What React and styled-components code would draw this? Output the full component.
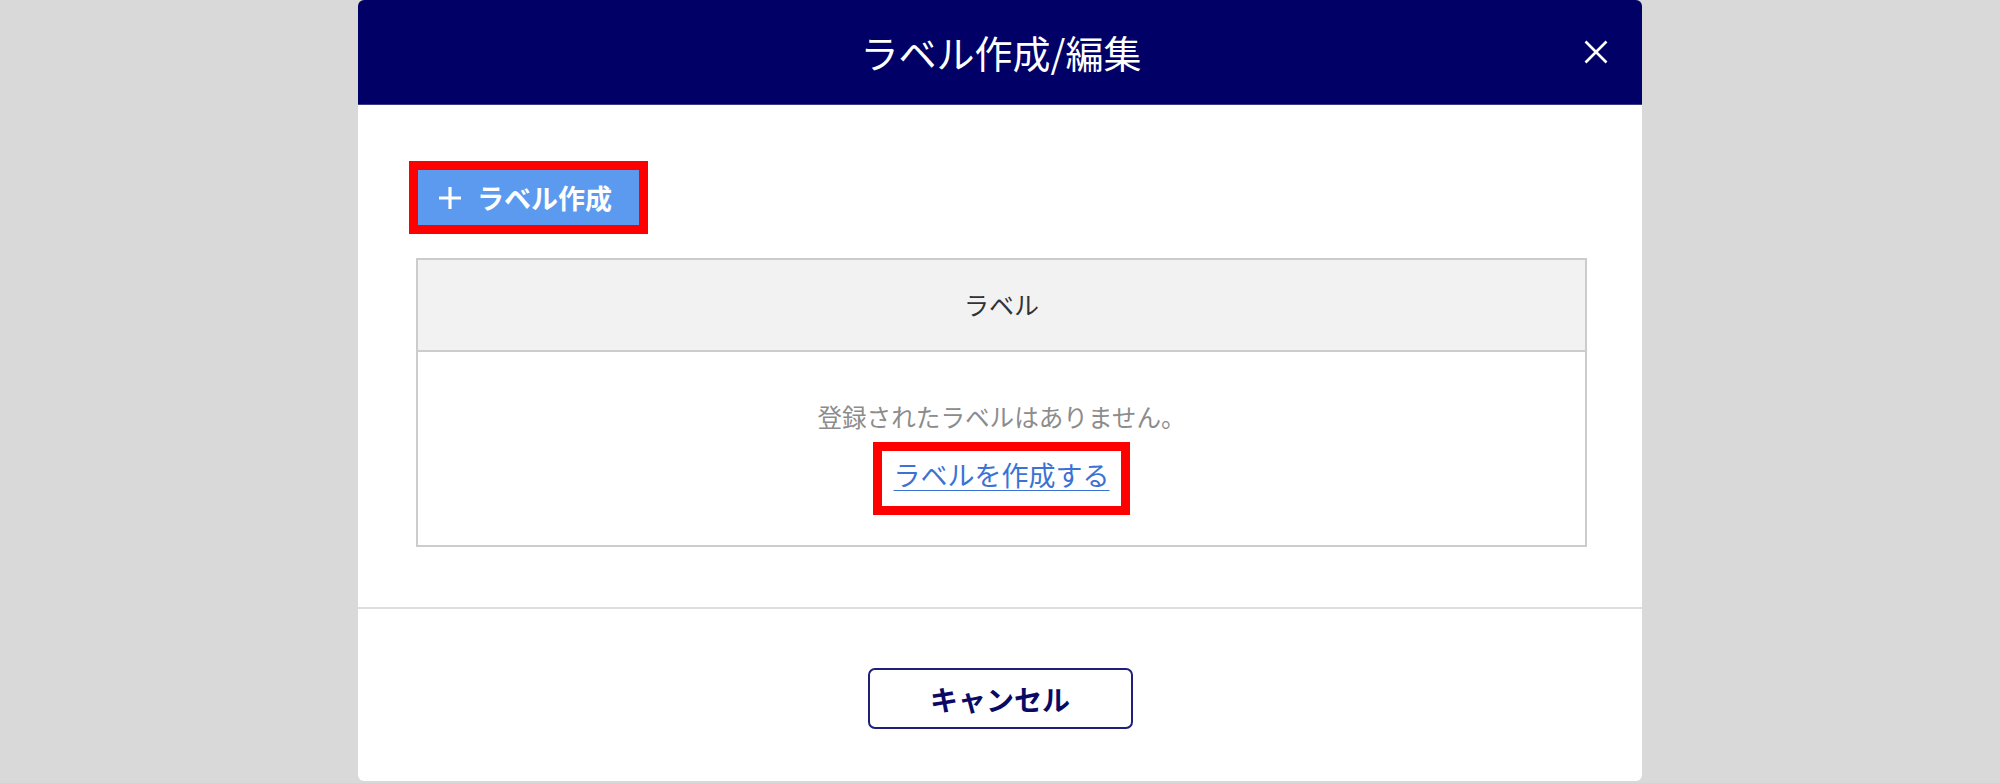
import React from "react";
import styled, { createGlobalStyle } from "styled-components";

const GlobalStyle = createGlobalStyle`
  html, body {
    margin: 0;
    padding: 0;
    background: #d9d9d9;
    font-family: "Noto Sans CJK JP", "Noto Sans", sans-serif;
  }
  * { box-sizing: border-box; }
`;

const Page = styled.div`
  display: flex;
  justify-content: center;
  width: 2000px;
  height: 783px;
  background: #d9d9d9;
`;

const Modal = styled.div`
  width: 1284px;
  height: 781px;
  background: #ffffff;
  border-radius: 6px;
  overflow: hidden;
  display: flex;
  flex-direction: column;
`;

const Header = styled.div`
  height: 105px;
  flex: none;
  background: #000066;
  border-bottom: 1px solid #3a3a86;
  display: grid;
  grid-template-columns: 1fr auto 1fr;
  align-items: center;
`;

const Title = styled.h1`
  grid-column: 2;
  margin: 0;
  color: #ffffff;
  font-size: 38px;
  font-weight: 400;
  line-height: 1;
  letter-spacing: 0;
  padding-left: 2px;
`;

const CloseButton = styled.button`
  grid-column: 3;
  justify-self: end;
  margin-right: 34px;
  width: 24px;
  height: 24px;
  padding: 0;
  border: none;
  background: transparent;
  display: flex;
  align-items: center;
  justify-content: center;
  cursor: pointer;
`;

const Body = styled.div`
  padding: 65px 55px 0 58px;
  height: 502px;
  flex: none;
  display: flex;
  flex-direction: column;
  align-items: flex-start;
`;

const CreateButton = styled.button`
  margin-left: 2px;
  width: 221px;
  height: 55px;
  background: #5b9aee;
  border: none;
  outline: 9px solid #ff0000;
  display: flex;
  align-items: center;
  gap: 16px;
  padding: 0 0 0 21px;
  color: #ffffff;
  font-family: "Noto Sans CJK JP", sans-serif;
  font-size: 27px;
  font-weight: 700;
  letter-spacing: 0;
  cursor: pointer;
`;

const Table = styled.div`
  margin-top: 33px;
  width: 100%;
  border: 2px solid #cccccc;
`;

const HeadRow = styled.div`
  height: 92px;
  background: #f2f2f2;
  border-bottom: 2px solid #cccccc;
  display: flex;
  align-items: center;
  justify-content: center;
  color: #333333;
  font-size: 25px;
  padding-bottom: 2px;
`;

const EmptyCell = styled.div`
  height: 193px;
  display: flex;
  flex-direction: column;
  align-items: center;
  padding-top: 46px;
`;

const EmptyText = styled.p`
  margin: 0;
  height: 36px;
  line-height: 36px;
  font-size: 24.6px;
  color: #8c8c8c;
`;

const CreateLink = styled.a`
  margin-top: 17px;
  width: 239px;
  height: 55px;
  outline: 9px solid #ff0000;
  display: flex;
  align-items: center;
  justify-content: center;
  padding-bottom: 8px;
  font-size: 27px;
  color: #3b72d4;
  text-decoration: underline;
  text-underline-offset: 4px;
  text-decoration-thickness: 1px;
  cursor: pointer;
`;

const Footer = styled.div`
  flex: 1;
  border-top: 2px solid #dedede;
  display: flex;
  justify-content: center;
  padding-top: 59px;
`;

const CancelButton = styled.button`
  width: 265px;
  height: 61px;
  background: #ffffff;
  border: 2px solid #1f1f7a;
  border-radius: 7px;
  color: #0a0a66;
  font-family: "Noto Sans CJK JP", sans-serif;
  font-size: 28px;
  font-weight: 700;
  letter-spacing: 0;
  display: flex;
  align-items: center;
  justify-content: center;
  cursor: pointer;
`;

const CloseIcon = () => (
  <svg width="24" height="24" viewBox="0 0 24 24">
    <path d="M1.5 1.5 L22.5 22.5 M22.5 1.5 L1.5 22.5" stroke="#ffffff" strokeWidth="2.6" fill="none" />
  </svg>
);

const PlusIcon = () => (
  <svg width="22" height="22" viewBox="0 0 22 22">
    <path d="M11 0 V22 M0 11 H22" stroke="#ffffff" strokeWidth="3.2" fill="none" />
  </svg>
);

export default function App() {
  return (
    <>
      <GlobalStyle />
      <Page>
        <Modal>
          <Header>
            <Title>ラベル作成/編集</Title>
            <CloseButton aria-label="close">
              <CloseIcon />
            </CloseButton>
          </Header>
          <Body>
            <CreateButton>
              <PlusIcon />
              <span>ラベル作成</span>
            </CreateButton>
            <Table>
              <HeadRow>ラベル</HeadRow>
              <EmptyCell>
                <EmptyText>登録されたラベルはありません。</EmptyText>
                <CreateLink>ラベルを作成する</CreateLink>
              </EmptyCell>
            </Table>
          </Body>
          <Footer>
            <CancelButton>キャンセル</CancelButton>
          </Footer>
        </Modal>
      </Page>
    </>
  );
}
